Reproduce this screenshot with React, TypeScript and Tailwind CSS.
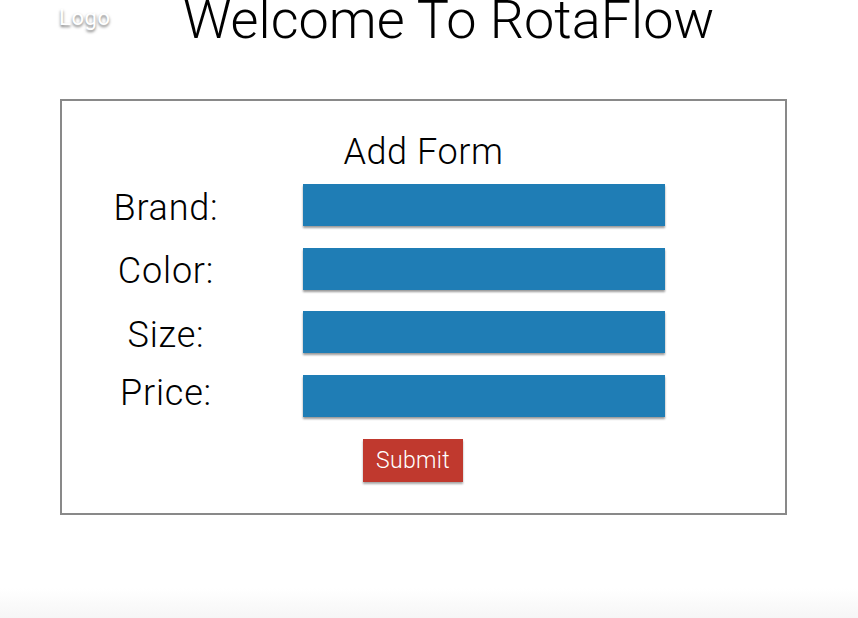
const fields = [
  { label: "Brand:", pad: "pt-[5px]" },
  { label: "Color:", pad: "pt-[5px]" },
  { label: "Size:", pad: "pt-[5px]" },
  { label: "Price:", pad: "pb-[6px]" },
];

const App = () => {
  return (
    <main
      className="relative flex h-[618px] w-full flex-col overflow-hidden bg-white font-light text-black"
      style={{ fontFamily: "Roboto, 'Liberation Sans', sans-serif" }}
    >
      {/* HEADER */}
      <div className="flex items-start">
        <div className="ml-[59px] mt-[5px] w-[124px] text-[22px] leading-[26px] font-normal tracking-[0.6px] text-white [text-shadow:0_2px_3px_rgba(0,0,0,0.55)]">
          Logo
        </div>
        <h1 className="-mt-[7px] text-[54px] leading-none font-light">
          Welcome To RotaFlow
        </h1>
      </div>

      {/* ADD FORM */}
      <div className="ml-[60px] mt-[52px] w-[727px] border-2 border-[#898989] pb-[31px]">
        <h2 className="mt-[30px] text-center text-[36px] leading-[42px] tracking-[0.6px]">
          Add Form
        </h2>
        <div className="mt-[11px] flex flex-col gap-y-[21.5px]">
          {fields.map((f) => (
            <div key={f.label} className="flex h-[42px] items-center">
              <label
                className={`w-[208px] text-center text-[36px] leading-[42px] tracking-[0.8px] ${f.pad}`}
              >
                {f.label}
              </label>
              <div className="ml-[33px] h-[42px] w-[362px] bg-[#1f7db5] shadow-[0_2px_2px_rgba(0,0,0,0.4)]" />
            </div>
          ))}
        </div>
        <button className="ml-[301px] mt-[22px] flex h-[43px] w-[100px] items-center justify-center bg-[#c0392e] pt-[3px] text-[23px] font-light tracking-[0.3px] text-white shadow-[0_2px_2px_rgba(0,0,0,0.35)]">
          Submit
        </button>
      </div>

      <div className="mt-auto h-[30px] w-full bg-gradient-to-b from-white to-[#f6f6f6]" />
    </main>
  );
};

export default App;
